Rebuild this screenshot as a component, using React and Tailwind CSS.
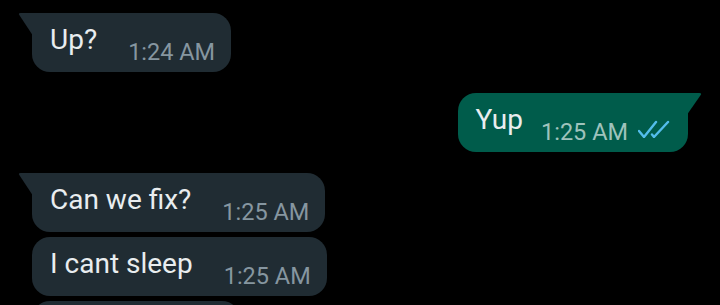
import React from "react";

function TailLeft({ color }) {
  return (
    <svg className="absolute left-[-14px] top-0" width="14" height="22" viewBox="0 0 14 22">
      <path d="M14.5 0 H2.6 Q0 0 1.3 2.1 L14.5 22 Z" fill={color} />
    </svg>
  );
}

function TailRight({ color }) {
  return (
    <svg className="absolute right-[-14px] top-0" width="14" height="21" viewBox="0 0 14 21">
      <path d="M-0.5 0 H11.4 Q14 0 12.7 2.1 L-0.5 21 Z" fill={color} />
    </svg>
  );
}

function Incoming({ text, time, tail }) {
  return (
    <div
      className={`relative self-start ml-[32px] flex items-end bg-[#202c33] pt-[11px] pb-[6px] pl-[18px] pr-[16px] rounded-[18px] ${
        tail ? "rounded-tl-none" : ""
      }`}
    >
      {tail && <TailLeft color="#202c33" />}
      <span className="mb-[10px] text-[28px] leading-[32px] text-[#e9edef]">{text}</span>
      <span className="ml-[31px] text-[23.5px] leading-[28px] text-[#8696a0]">{time}</span>
    </div>
  );
}

function Outgoing({ text, time }) {
  return (
    <div className="relative self-end mr-[32px] flex items-end bg-[#005c4b] pt-[11px] pb-[6px] pl-[18px] pr-[18px] rounded-[18px] rounded-tr-none">
      <TailRight color="#005c4b" />
      <span className="mb-[10px] text-[28px] leading-[32px] text-[#e9edef]">{text}</span>
      <span className="ml-[18px] text-[23.5px] leading-[28px] text-[#9fc3bc]">{time}</span>
      <svg className="ml-[10px] mb-[8px]" width="32" height="18" viewBox="0 0 32 18">
        <path d="M1 11 L6 17 L18 2" fill="none" stroke="#53bdeb" strokeWidth="2.4" strokeLinecap="round" strokeLinejoin="round" />
        <path d="M14 14.5 L16 17 L30 2" fill="none" stroke="#53bdeb" strokeWidth="2.4" strokeLinecap="round" strokeLinejoin="round" />
      </svg>
    </div>
  );
}

export default function App() {
  return (
    <div
      className="h-[305px] w-[720px] overflow-hidden bg-black flex flex-col pt-[13px]"
      style={{ fontFamily: "Roboto, 'Noto Sans', sans-serif" }}
    >
      <Incoming text="Up?" time="1:24 AM" tail />
      <div className="mt-[21px] flex flex-col">
        <Outgoing text="Yup" time="1:25 AM" />
      </div>
      <div className="mt-[21px] flex flex-col gap-[5px]">
        <Incoming text="Can we fix?" time="1:25 AM" tail />
        <Incoming text="I cant sleep" time="1:25 AM" />
        <div className="ml-[32px] h-[59px] w-[208px] rounded-[18px] bg-[#202c33]" />
      </div>
    </div>
  );
}
